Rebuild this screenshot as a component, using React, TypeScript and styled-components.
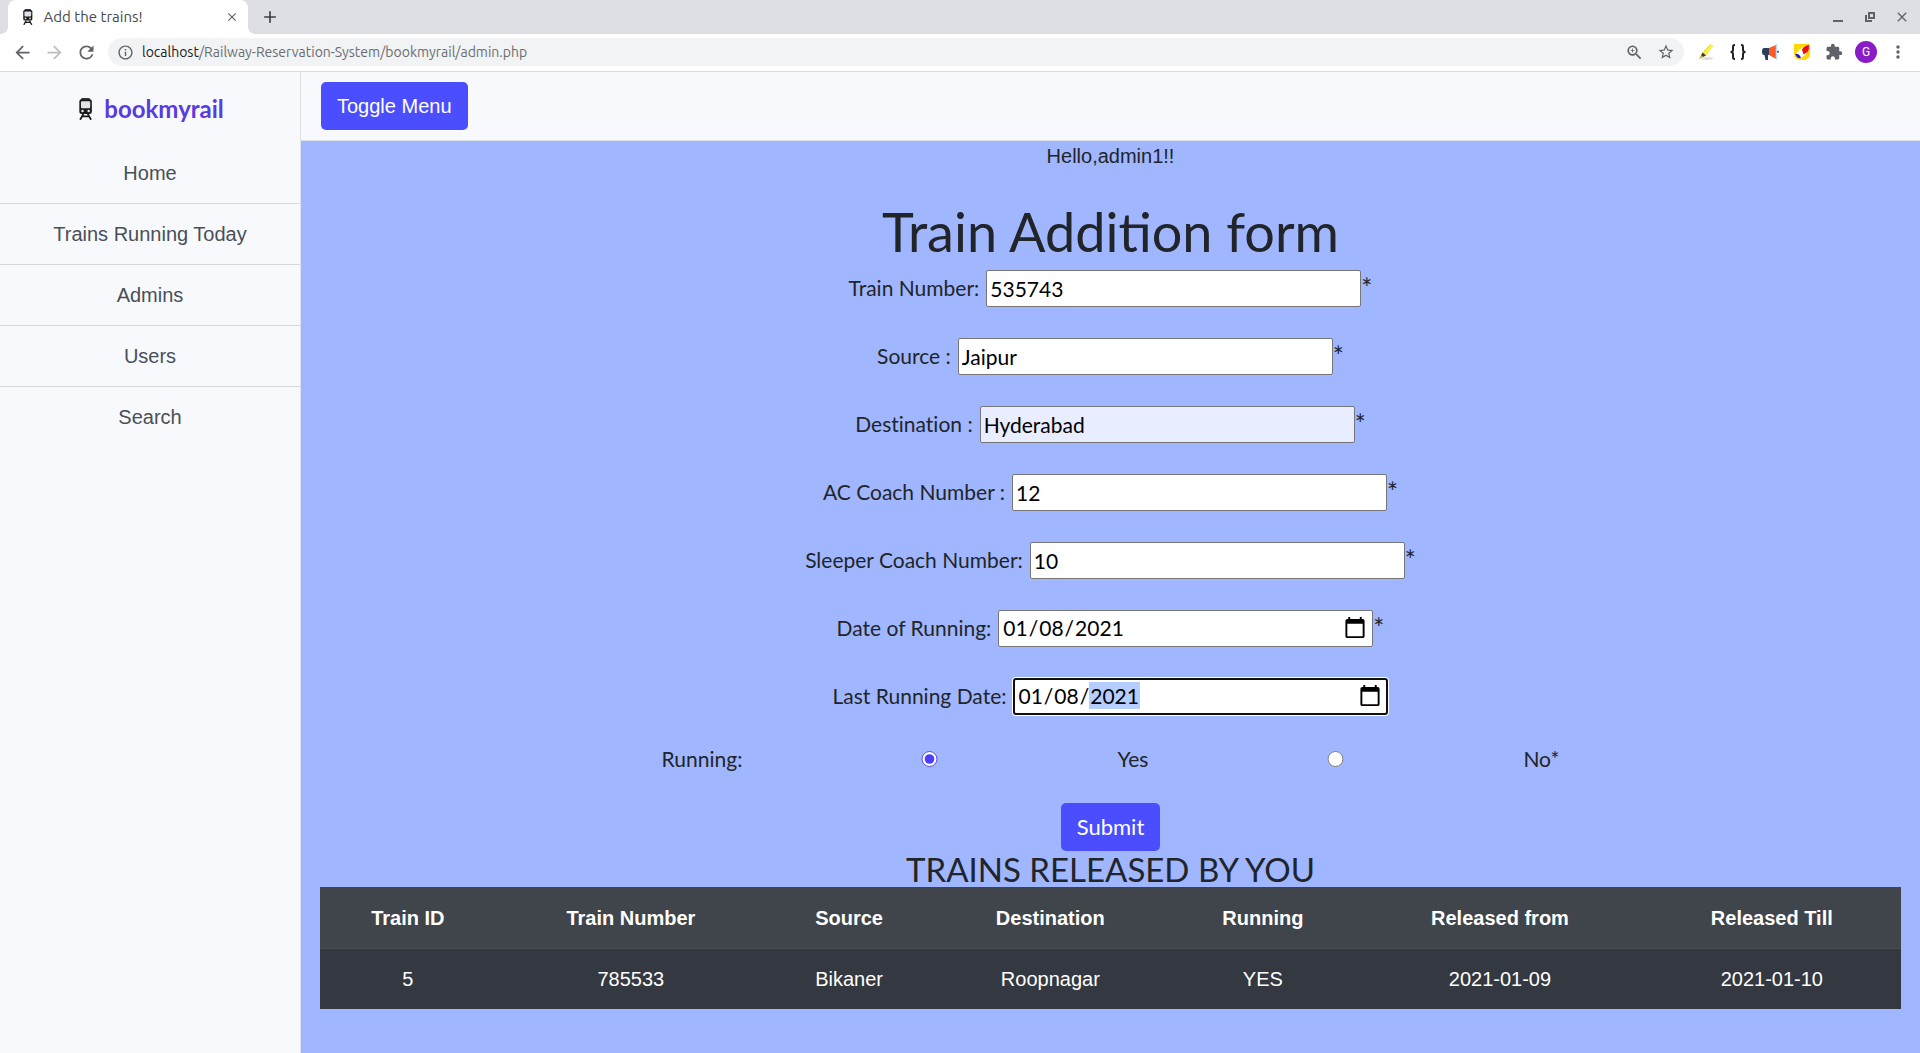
import React from 'react';
import styled, { createGlobalStyle, css } from 'styled-components';
import {
  MdAdd, MdArrowBack, MdArrowForward, MdClose, MdExtension, MdInfoOutline,
  MdMoreVert, MdRefresh, MdStarBorder, MdZoomIn,
} from 'react-icons/md';

const sans = '"Liberation Sans", Arial, sans-serif';
const comic = '"Comic Sans MS", Lato, sans-serif';
const system = 'Ubuntu, "Noto Sans", sans-serif';

const GlobalStyle = createGlobalStyle`
  *, *::before, *::after { box-sizing: border-box; font-feature-settings: "liga" 0; }
  body { margin: 0; font: 20px/30px ${sans}; color: #212529; background: #a0b6ff; }
  #root { min-height: 100vh; display: flex; }
`;

const Window = styled.div`
  flex: 1;
  min-width: 0;
  display: flex;
  flex-direction: column;
`;

const TabStrip = styled.header`
  display: flex;
  align-items: center;
  height: 34px;
  padding: 0 8px;
  background: #dedfe4;
`;

const Tab = styled.div`
  position: relative;
  display: flex;
  align-items: center;
  gap: 11px;
  width: 240px;
  height: 34px;
  padding: 0 8px 0 15px;
  border-radius: 8px 8px 0 0;
  background: #fff;
  font: 15px/20px ${system};
  color: #45494d;
  &::before, &::after {
    content: '';
    position: absolute;
    bottom: 0;
    width: 8px;
    height: 8px;
  }
  &::before {
    left: -8px;
    background: radial-gradient(circle at 0 0, #dedfe4 8px, #fff 8px);
  }
  &::after {
    right: -8px;
    background: radial-gradient(circle at 100% 0, #dedfe4 8px, #fff 8px);
  }
`;

const TabTitle = styled.span`
  flex: 1;
`;

const IconButton = styled.button<{ $size?: number; $faded?: boolean }>`
  display: grid;
  place-items: center;
  flex: none;
  width: ${(p) => p.$size ?? 32}px;
  height: ${(p) => p.$size ?? 32}px;
  padding: 0;
  border: 0;
  background: none;
  color: ${(p) => (p.$faded ? '#bcbec1' : '#5f6368')};
`;

const NewTab = styled(IconButton)`
  margin-left: 8px;
  color: #3c4043;
`;

const WindowControls = styled.div`
  display: flex;
  margin-left: auto;
  margin-right: -6px;
`;

const Toolbar = styled.nav`
  display: flex;
  align-items: center;
  height: 38px;
  padding: 0 6px 1px;
  border-bottom: 1px solid #d9dbdf;
  background: #fff;
`;

const Omnibox = styled.div`
  flex: 1;
  display: flex;
  align-items: center;
  height: 28px;
  margin: 0 6px;
  padding: 0 2px 0 9px;
  border-radius: 14px;
  background: #f1f3f4;
  color: #5f6368;
`;

const Url = styled.span`
  flex: 1;
  margin-left: 8px;
  font: 14px/20px ${system};
  color: #6a6d70;
  b { font-weight: 400; color: #202124; }
`;

const Avatar = styled.span`
  display: grid;
  place-items: center;
  width: 22px;
  height: 22px;
  border-radius: 50%;
  background: #8a1cc5;
  color: #fff;
  font: 12px/22px Roboto, sans-serif;
`;

const Page = styled.div`
  flex: 1;
  display: flex;
`;

const Sidebar = styled.aside`
  flex: none;
  width: 301px;
  border-right: 1px solid #dee2e6;
  background: #f8f9fc;
`;

const Brand = styled.div`
  display: flex;
  align-items: center;
  justify-content: center;
  gap: 12px;
  height: 71px;
  padding: 2px 0 0 3px;
  color: #5a3be0;
  font: 700 24px/30px ${comic};
`;

const MenuLink = styled.a`
  display: block;
  padding: 15px;
  text-align: center;
  color: #495057;
  text-decoration: none;
  & + & { border-top: 1px solid #d5d7da; }
`;

const Main = styled.main`
  flex: 1;
  min-width: 0;
  background: #a0b6ff;
`;

const TopBar = styled.div`
  padding: 10px 20px;
  border-bottom: 1px solid #dee2e6;
  background: #f8f9fc;
`;

const primary = css`
  height: 48px;
  padding: 0 16px;
  border: 0;
  border-radius: 5px;
  background: #4a4eff;
  color: #fff;
`;

const ToggleButton = styled.button`
  ${primary}
  display: block;
  font: 20px/30px ${sans};
`;

const Content = styled.div`
  padding: 0 19px;
  text-align: center;
`;

const Greeting = styled.p`
  margin: 0 0 30px;
`;

const Title = styled.h1`
  margin: 0 0 6px;
  font: 400 54px/62px ${comic};
`;

const Form = styled.form`
  display: flex;
  flex-direction: column;
  align-items: center;
  gap: 30px;
  font: 21px/28px ${comic};
`;

const Row = styled.div`
  display: flex;
  align-items: center;
  height: 38px;
`;

const FieldLabel = styled.label`
  margin-right: 7px;
`;

const Required = styled.span`
  font-size: 26px;
`;

const Field = styled.input<{ $autofilled?: boolean; $active?: boolean }>`
  width: 375px;
  height: 37px;
  padding: 1px 3px;
  border: 1px solid #767676;
  border-radius: 2px;
  outline: none;
  background: ${(p) => (p.$autofilled ? '#e8edff' : '#fff')};
  color: #000;
  font: 21px/28px ${comic};
  &::-webkit-datetime-edit-fields-wrapper { padding: 0; }
  &::-webkit-calendar-picker-indicator { width: 24px; height: 24px; padding: 0; margin-right: 2px; }
  ${(p) => p.$active && css`
    padding: 0 2px;
    border: 2px solid #101010;
    border-radius: 3px;
    box-shadow: 0 0 0 1px #fff;
    &::-webkit-datetime-edit-year-field { background: #b5cdff; }
  `}
`;

const RadioRow = styled.div`
  display: flex;
  align-items: center;
  height: 28px;
`;

const Radio = styled.input`
  width: 375px;
  height: 16px;
  margin: 0;
  accent-color: #4a3eff;
`;

const SubmitButton = styled.button`
  ${primary}
  font: 22px/28px ${comic};
`;

const Subtitle = styled.h3`
  margin: 0;
  font: 400 33px/36px ${comic};
`;

const Table = styled.table`
  width: 100%;
  border-collapse: collapse;
  color: #fff;
  th, td { padding: 15px; }
  th { padding-top: 16px; background: #40444b; }
  td { border-top: 1px solid #454d55; background: #343840; }
`;

function TrainIcon({ height }: { height: number }) {
  return (
    <svg width={height * 0.6} height={height} viewBox="0 0 12 20" aria-hidden="true">
      <path d="M2.500 0h7l1 2h-9z" fill="#3a3a3a" />
      <rect x="0.300" y="1.200" width="11.400" height="13.300" rx="2" fill="#1b1b1b" />
      <rect x="1.800" y="3" width="8.400" height="6.300" rx="1" fill="#dfe2e6" />
      <circle cx="3.200" cy="11.800" r="1.100" fill="#e8e8e8" />
      <circle cx="8.800" cy="11.800" r="1.100" fill="#e8e8e8" />
      <path d="M4 14.500 1 19.800M8 14.500l3 5.300M3 16.800h6" stroke="#1b1b1b" strokeWidth="1.600" />
    </svg>
  );
}

function Marker() {
  return (
    <svg width="18" height="18" viewBox="0 0 18 18">
      <ellipse cx="10" cy="15.500" rx="6" ry="1.500" fill="#ddd" />
      <path d="M5.500 9.500 13 1.500q2.500-.5 3 1.500L9 12.500z" fill="#f5e100" />
      <path d="M8 10.500 15 2.500" stroke="#fff79a" strokeWidth="1.200" />
      <path d="m5.500 9.500 3.500 3-3 1.500-2-1.500z" fill="#3a3a30" />
      <path d="m4 12.500 2 1.500-4 2z" fill="#c8a800" />
    </svg>
  );
}

function Braces() {
  return (
    <svg width="18" height="18" viewBox="0 0 18 18" fill="none" stroke="#222" strokeWidth="2">
      <path d="M6 2H5.500Q4 2 4 4v3Q4 9 1.500 9q2.500 0 2.500 2v3q0 2 1.500 2H6M12 2h.5Q14 2 14 4v3q0 2 2.500 2-2.500 0-2.500 2v3q0 2-1.500 2H12" />
    </svg>
  );
}

function Megaphone() {
  return (
    <svg width="18" height="18" viewBox="0 0 18 18">
      <path d="M3 5h5v7H7v5H4.500l-1-5H3Q1 12 1 8.500T3 5z" fill="#2b3f5c" />
      <path d="m8 5 7-3v14l-7-4z" fill="#ff5a26" />
      <path d="M15.500 1v15.500" stroke="#b9dcf5" strokeWidth="1.500" />
      <circle cx="17" cy="8.800" r="1" fill="#2b3f5c" />
    </svg>
  );
}

function Brush() {
  return (
    <svg width="18" height="18" viewBox="0 0 18 18">
      <path d="M1 1h16v10q0 6-8 6t-8-6z" fill="#ffd800" />
      <path d="M1.500 12 7 6l5-3 4 1-3 7-6 5z" fill="#fff" />
      <path d="M16 2q-5 .5-7 4.500l1.500 5L14.500 9q2-3 1.500-7z" fill="#f20d0d" />
      <path d="M2 11q4-1 6 4-4 1-6-4z" fill="#2814c8" />
    </svg>
  );
}

const menu = ['Home', 'Trains Running Today', 'Admins', 'Users', 'Search'];

const fields = [
  { id: 'number', label: 'Train Number:', value: '535743', required: true },
  { id: 'source', label: 'Source :', value: 'Jaipur', required: true },
  { id: 'destination', label: 'Destination :', value: 'Hyderabad', required: true, autofilled: true },
  { id: 'ac', label: 'AC Coach Number :', value: '12', required: true },
  { id: 'sleeper', label: 'Sleeper Coach Number:', value: '10', required: true },
  { id: 'from', label: 'Date of Running:', value: '2021-01-08', type: 'date', required: true },
  { id: 'till', label: 'Last Running Date:', value: '2021-01-08', type: 'date', active: true },
];

const columns = ['Train ID', 'Train Number', 'Source', 'Destination', 'Running', 'Released from', 'Released Till'];
const trains = [['5', '785533', 'Bikaner', 'Roopnagar', 'YES', '2021-01-09', '2021-01-10']];

function BrowserChrome() {
  return (
    <>
      <TabStrip>
        <Tab>
          <TrainIcon height={16} />
          <TabTitle>Add the trains!</TabTitle>
          <IconButton $size={16} aria-label="Close tab"><MdClose size={14} /></IconButton>
        </Tab>
        <NewTab $size={28} aria-label="New tab"><MdAdd size={20} /></NewTab>
        <WindowControls>
          <IconButton aria-label="Minimize">
            <svg width="12" height="12"><path d="M1 10h10" stroke="currentColor" strokeWidth="2" /></svg>
          </IconButton>
          <IconButton aria-label="Restore">
            <svg width="12" height="12" fill="none" stroke="currentColor" strokeWidth="2">
              <path d="M5 2h5v5H5zM2 4v6h6" />
            </svg>
          </IconButton>
          <IconButton aria-label="Close"><MdClose size={16} /></IconButton>
        </WindowControls>
      </TabStrip>
      <Toolbar>
        <IconButton aria-label="Back"><MdArrowBack size={21} /></IconButton>
        <IconButton $faded aria-label="Forward"><MdArrowForward size={21} /></IconButton>
        <IconButton aria-label="Reload"><MdRefresh size={21} /></IconButton>
        <Omnibox>
          <MdInfoOutline size={17} />
          <Url><b>localhost</b>/Railway-Reservation-System/bookmyrail/admin.php</Url>
          <IconButton aria-label="Zoom"><MdZoomIn size={19} /></IconButton>
          <IconButton aria-label="Bookmark"><MdStarBorder size={18} /></IconButton>
        </Omnibox>
        <IconButton aria-label="Highlighter"><Marker /></IconButton>
        <IconButton aria-label="Formatter"><Braces /></IconButton>
        <IconButton aria-label="Announcements"><Megaphone /></IconButton>
        <IconButton aria-label="Painter"><Brush /></IconButton>
        <IconButton aria-label="Extensions"><MdExtension size={18} /></IconButton>
        <IconButton aria-label="Profile"><Avatar>G</Avatar></IconButton>
        <IconButton aria-label="Menu"><MdMoreVert size={20} /></IconButton>
      </Toolbar>
    </>
  );
}

export default function App() {
  return (
    <Window>
      <GlobalStyle />
      <BrowserChrome />
      <Page>
        <Sidebar>
          <Brand><TrainIcon height={22} />bookmyrail</Brand>
          {menu.map((item) => <MenuLink key={item} href="#">{item}</MenuLink>)}
        </Sidebar>
        <Main>
          <TopBar><ToggleButton type="button">Toggle Menu</ToggleButton></TopBar>
          <Content>
            <Greeting>Hello,admin1!!</Greeting>
            <Title>Train Addition form</Title>
            <Form onSubmit={(e) => e.preventDefault()}>
              {fields.map((f) => (
                <Row key={f.id}>
                  <FieldLabel htmlFor={f.id}>{f.label}</FieldLabel>
                  <Field
                    id={f.id}
                    type={f.type ?? 'text'}
                    defaultValue={f.value}
                    $autofilled={f.autofilled}
                    $active={f.active}
                  />
                  {f.required && <Required>*</Required>}
                </Row>
              ))}
              <RadioRow role="radiogroup" aria-labelledby="running">
                <span id="running">Running:</span>
                <Radio type="radio" name="running" id="yes" defaultChecked />
                <label htmlFor="yes">Yes</label>
                <Radio type="radio" name="running" id="no" />
                <label htmlFor="no">No*</label>
              </RadioRow>
              <SubmitButton type="submit">Submit</SubmitButton>
            </Form>
            <Subtitle>TRAINS RELEASED BY YOU</Subtitle>
            <Table>
              <thead>
                <tr>{columns.map((c) => <th key={c}>{c}</th>)}</tr>
              </thead>
              <tbody>
                {trains.map((t) => <tr key={t[0]}>{t.map((v) => <td key={v}>{v}</td>)}</tr>)}
              </tbody>
            </Table>
          </Content>
        </Main>
      </Page>
    </Window>
  );
}
